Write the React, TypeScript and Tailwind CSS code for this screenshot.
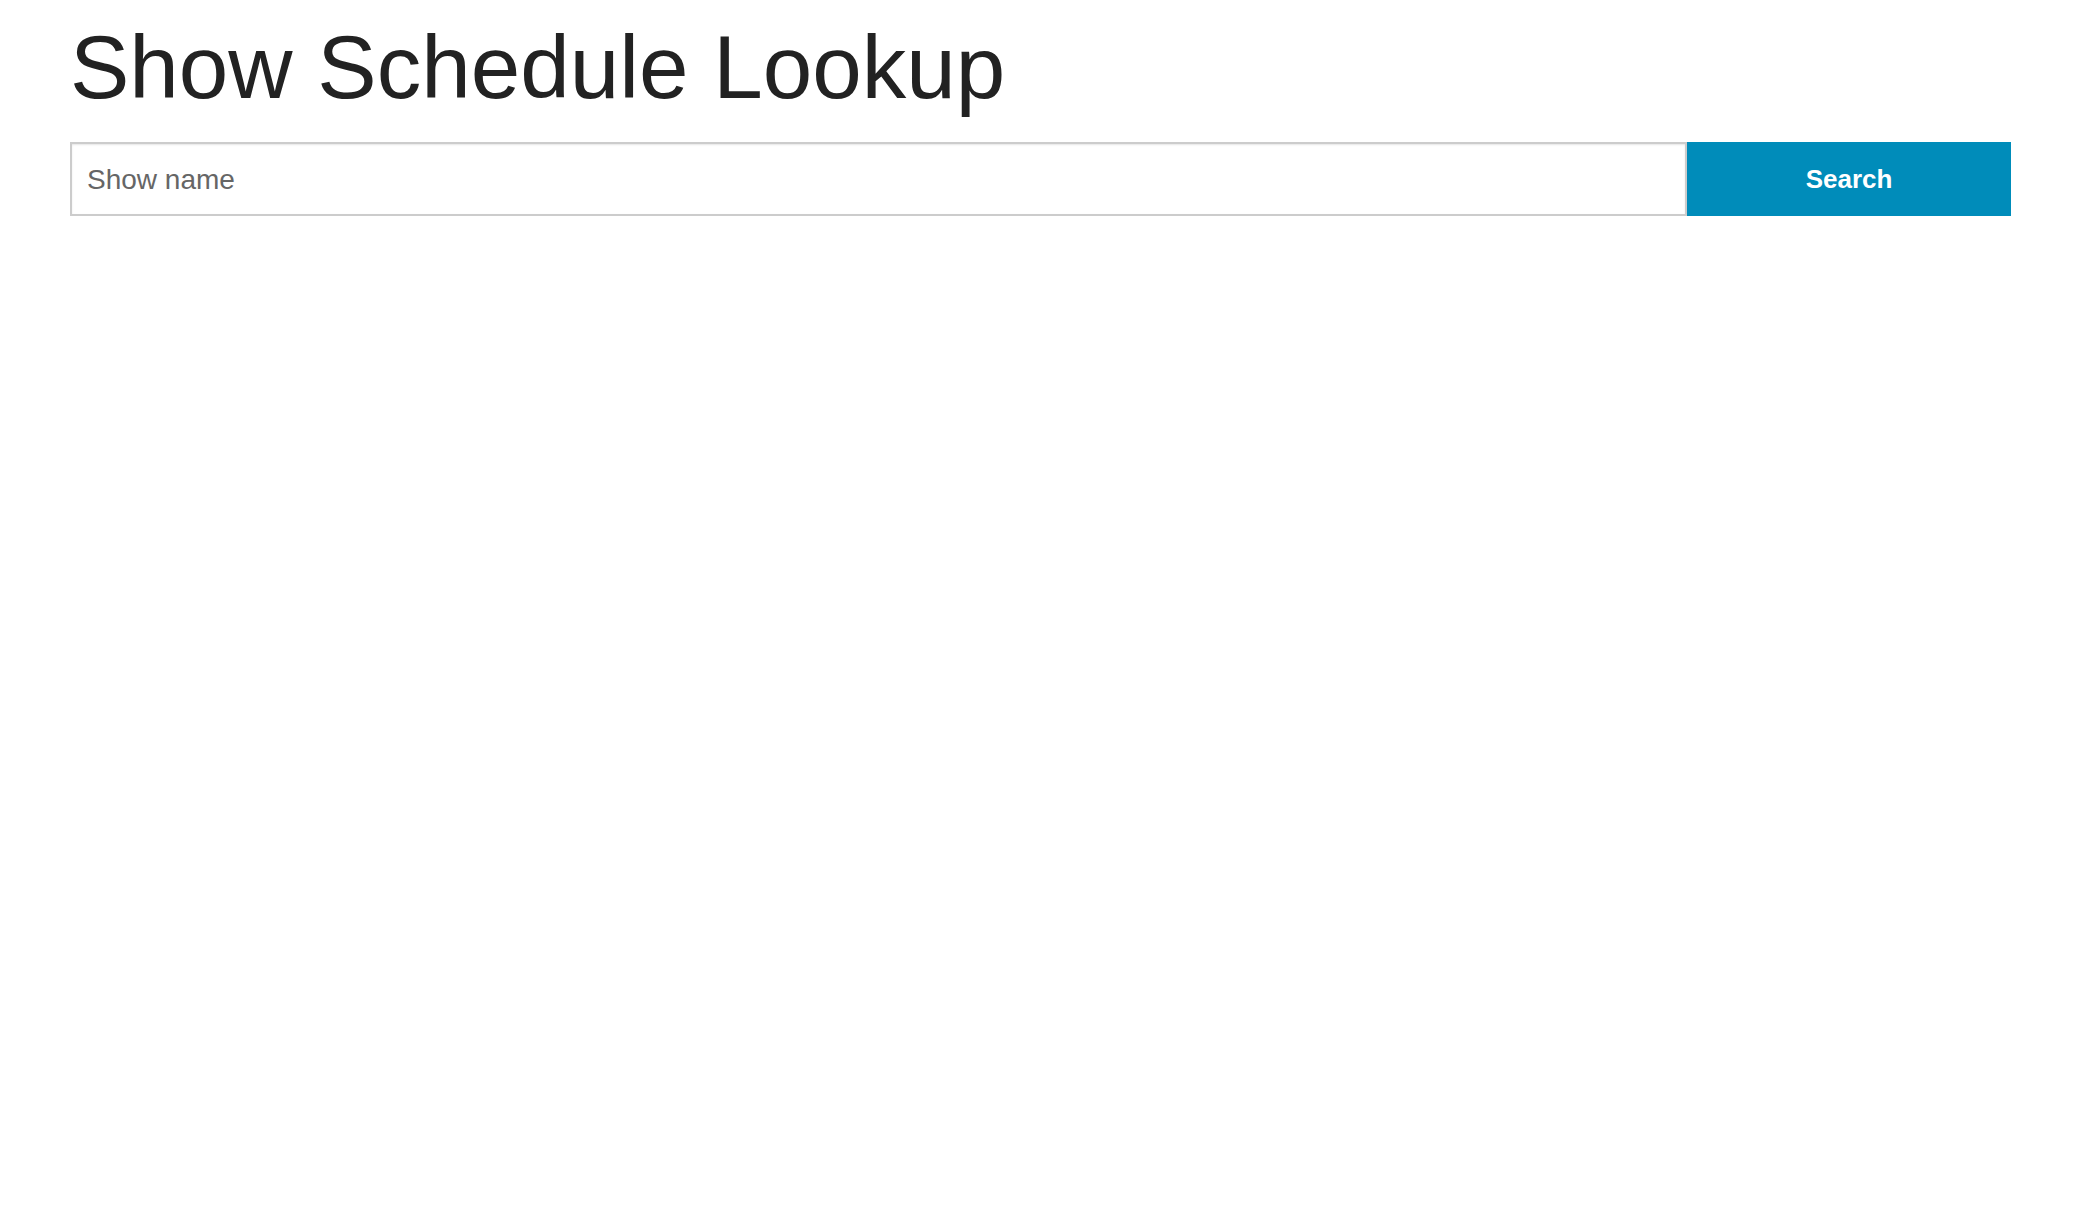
import { useState } from 'react'

export default function App() {
  const [query, setQuery] = useState('')

  return (
    <div className="min-h-screen bg-white pl-[70px] pr-[87px] pt-[17px] font-['Liberation_Sans',Arial,sans-serif]">
      <h1 className="text-[89px] leading-[101px] font-normal text-[#222222]">Show Schedule Lookup</h1>

      {/* Search bar */}
      <form
        className="mt-[24px] flex h-[74px]"
        onSubmit={(e) => e.preventDefault()}
      >
        <input
          type="text"
          value={query}
          onChange={(e) => setQuery(e.target.value)}
          placeholder="Show name"
          className="h-full flex-1 border-2 border-[#cccccc] bg-white px-[15px] pt-[2px] text-[28px] text-[#222222] placeholder:text-[#666666] shadow-[inset_0_1px_2px_rgba(0,0,0,0.1)] focus:outline-none"
        />
        <button
          type="submit"
          className="h-full w-[324px] bg-[#008cba] text-[26px] font-bold text-white"
        >
          Search
        </button>
      </form>
    </div>
  )
}
